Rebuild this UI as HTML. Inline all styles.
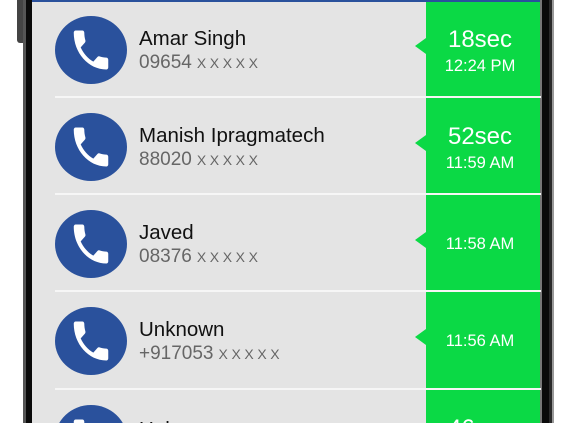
<!DOCTYPE html>
<html><head><meta charset="utf-8"><style>
*{margin:0;padding:0;box-sizing:border-box}
html,body{width:583px;height:423px;overflow:hidden;background:#fff;font-family:"Liberation Sans",Arial,sans-serif}
#w{position:relative;width:583px;height:423px;overflow:hidden}
.a{position:absolute}
.row{position:absolute;left:32px;width:508px;height:97px}
.circ{position:absolute;left:23px;width:72px;height:68px;border-radius:50%;background:#2a519c;top:16px}
.circ svg{position:absolute;left:13px;top:8px}
.name{position:absolute;left:107px;font-size:20.5px;color:#111;white-space:nowrap}
.num{position:absolute;left:107px;font-size:19px;color:#666;white-space:nowrap}
.num span{font-size:14px;letter-spacing:3.6px;margin-left:5px}
.div{position:absolute;left:23px;width:486px;height:2px;background:#f6f6f6}
.notch{position:absolute;left:383px;width:0;height:0;border-top:8px solid transparent;border-bottom:8px solid transparent;border-right:11px solid #0bd945}
.dur{position:absolute;left:394px;width:108px;text-align:center;color:#fff;font-size:24px}
.tm{position:absolute;left:394px;width:108px;text-align:center;color:#fff;font-size:16.5px}
</style></head><body><div id="w">
<div class="a" style="left:17px;top:0;width:6px;height:43px;background:#444;border-radius:0 0 0 3px"></div>
<div class="a" style="left:23px;top:0;width:3px;height:423px;background:#555"></div>
<div class="a" style="left:26px;top:0;width:6px;height:423px;background:#0a0a0a"></div>
<div class="a" style="left:32px;top:0;width:508px;height:423px;background:#e4e4e4"></div>
<div class="a" style="left:426px;top:0;width:114px;height:423px;background:#0bd945"></div>
<div class="a" style="left:32px;top:0;width:508px;height:2px;background:#2a519c"></div>
<div class="a" style="left:540px;top:0;width:2px;height:423px;background:#777"></div>
<div class="a" style="left:542px;top:0;width:8px;height:423px;background:#0a0a0a"></div>
<div class="a" style="left:549px;top:0;width:3px;height:423px;background:#2a2a2a"></div>
<div class="a" style="left:552px;top:0;width:2px;height:423px;background:#999"></div>

<svg width="0" height="0" style="position:absolute"><defs><symbol id="ph" viewBox="0 0 24 24"><path fill="#fff" d="M6.62 10.79c1.44 2.83 3.76 5.14 6.59 6.59l2.2-2.2c.27-.27.67-.36 1.02-.24 1.12.37 2.33.57 3.57.57.55 0 1 .45 1 1V20c0 .55-.45 1-1 1-9.39 0-17-7.61-17-17 0-.55.45-1 1-1h3.5c.55 0 1 .45 1 1 0 1.25.2 2.45.57 3.57.11.35.03.74-.25 1.02l-2.2 2.2z"/></symbol></defs></svg>

<div class="row" style="top:0">
 <div class="circ"><svg width="46" height="52" viewBox="0 0 24 24" preserveAspectRatio="none"><use href="#ph"/></svg></div>
 <div class="name" style="top:27px">Amar Singh</div>
 <div class="num" style="top:52px">09654<span>XXXXX</span></div>
 <div class="notch" style="top:38px"></div>
 <div class="dur" style="top:26px">18sec</div>
 <div class="tm" style="top:57px">12:24 PM</div>
 <div class="div" style="top:96px"></div>
</div>
<div class="row" style="top:97px">
 <div class="circ"><svg width="46" height="52" viewBox="0 0 24 24" preserveAspectRatio="none"><use href="#ph"/></svg></div>
 <div class="name" style="top:27px">Manish Ipragmatech</div>
 <div class="num" style="top:52px">88020<span>XXXXX</span></div>
 <div class="notch" style="top:38px"></div>
 <div class="dur" style="top:26px">52sec</div>
 <div class="tm" style="top:57px">11:59 AM</div>
 <div class="div" style="top:96px"></div>
</div>
<div class="row" style="top:194px">
 <div class="circ"><svg width="46" height="52" viewBox="0 0 24 24" preserveAspectRatio="none"><use href="#ph"/></svg></div>
 <div class="name" style="top:27px">Javed</div>
 <div class="num" style="top:52px">08376<span>XXXXX</span></div>
 <div class="notch" style="top:38px"></div>
 <div class="tm" style="top:41px">11:58 AM</div>
 <div class="div" style="top:96px"></div>
</div>
<div class="row" style="top:291px">
 <div class="circ"><svg width="46" height="52" viewBox="0 0 24 24" preserveAspectRatio="none"><use href="#ph"/></svg></div>
 <div class="name" style="top:27px">Unknown</div>
 <div class="num" style="top:52px">+917053<span>XXXXX</span></div>
 <div class="notch" style="top:38px"></div>
 <div class="tm" style="top:41px">11:56 AM</div>
 <div class="div" style="top:97px"></div>
</div>
<div class="row" style="top:389px">
 <div class="circ"><svg width="46" height="52" viewBox="0 0 24 24" preserveAspectRatio="none"><use href="#ph"/></svg></div>
 <div class="name" style="top:29px">Unknown</div>
 <div class="dur" style="top:26px">46sec</div>
</div>
</div></body></html>
